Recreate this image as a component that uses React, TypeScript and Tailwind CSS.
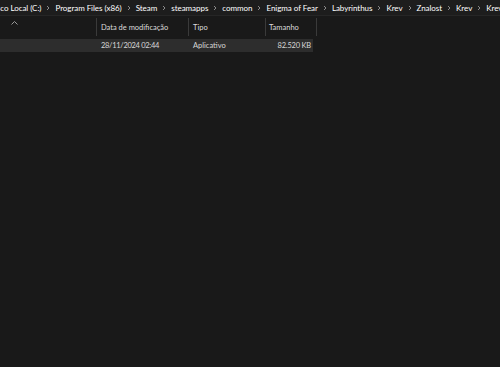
const crumbs = [
  "Disco Local (C:)",
  "Program Files (x86)",
  "Steam",
  "steamapps",
  "common",
  "Enigma of Fear",
  "Labyrinthus",
  "Krev",
  "Znalost",
  "Krev",
  "Krev",
];

function Chevron() {
  return (
    <svg width="4" height="6" viewBox="0 0 4 6" className="shrink-0">
      <path d="M1 1l2 2-2 2" fill="none" stroke="#8a8a8a" strokeWidth="1" />
    </svg>
  );
}

function Sep() {
  return <div className="w-px h-[18px] bg-[#3a3a3a] shrink-0" />;
}

export default function App() {
  return (
    <div
      className="w-[500px] h-[367px] overflow-hidden bg-[#191919] text-[7.5px] text-[#e6e6e6] whitespace-nowrap"
      style={{ fontFamily: 'Lato, "Noto Sans", sans-serif' }}
    >
      {/* Address bar */}
      <div className="h-[16px] pt-[1px] bg-[#1d1d1d] border-b border-[#262626] flex items-center overflow-hidden text-[8px] text-white">
        <div className="flex items-center gap-[5px] -ml-[11px] tracking-[-0.05px]">
          {crumbs.map((c, i) => (
            <div key={i} className="flex items-center gap-[5px]">
              <span className="leading-none">{c}</span>
              {i < crumbs.length - 1 && <Chevron />}
            </div>
          ))}
        </div>
      </div>

      {/* Column headers */}
      <div className="flex items-center h-[18px] mt-[2px] text-[#dcdcdc]">
        <div className="w-[96px] h-full relative shrink-0">
          <svg
            width="7"
            height="4"
            viewBox="0 0 7 4"
            className="absolute left-[11px] top-[3px]"
          >
            <path d="M0.5 3.5L3.5 0.5L6.5 3.5" fill="none" stroke="#9a9a9a" strokeWidth="1" />
          </svg>
        </div>
        <Sep />
        <div className="w-[91px] pl-[4px] pt-[2px] leading-none shrink-0">Data de modificação</div>
        <Sep />
        <div className="w-[76px] pl-[4px] pt-[2px] leading-none shrink-0">Tipo</div>
        <Sep />
        <div className="w-[50px] pl-[3px] pt-[2px] leading-none shrink-0">Tamanho</div>
        <Sep />
      </div>

      {/* File row */}
      <div className="flex items-center h-[13px] mt-[3px] pt-[1px] w-[313px] bg-[#2d2d2d] text-[#d8d8d8] leading-none">
        <div className="w-[101px] shrink-0" />
        <div className="w-[92px] shrink-0 tracking-[-0.3px]">28/11/2024 02:44</div>
        <div className="w-[77px] shrink-0">Aplicativo</div>
        <div className="w-[41px] shrink-0 text-right tracking-[-0.2px]">82.520 KB</div>
      </div>
    </div>
  );
}
